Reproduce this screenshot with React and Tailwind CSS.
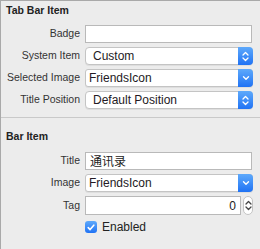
import React from 'react';

// --- small drawings ---
function UpDown({ className = 'stroke-white' }) {
  return (
    <svg width="7" height="11" viewBox="0 0 7 11" className={className} fill="none" strokeWidth="1.3" strokeLinecap="round" strokeLinejoin="round">
      <path d="M1 4 L3.5 1.5 L6 4" />
      <path d="M1 7 L3.5 9.5 L6 7" />
    </svg>
  );
}

function Down() {
  return (
    <svg width="8" height="6" viewBox="0 0 8 6" className="stroke-white" fill="none" strokeWidth="1.4" strokeLinecap="round" strokeLinejoin="round">
      <path d="M1.5 1.8 L4 4.3 L6.5 1.8" />
    </svg>
  );
}

// --- controls ---
function TextField({ children, right }) {
  return (
    <div className={`h-[18px] w-[167px] bg-white border border-[#b9b9b9] flex items-center px-[4px] text-[12px] text-[#222] ${right ? 'justify-end' : ''}`}>
      {children}
    </div>
  );
}

function PopUp({ value, pulldown }) {
  return (
    <div className={`h-[18px] w-[168px] flex bg-white border border-[#c4c4c4] shadow-[0_1px_0_rgba(0,0,0,0.06)] ${pulldown ? 'rounded-[3px]' : 'rounded-[4px]'}`}>
      <div className={`flex-1 flex items-center text-[12px] text-[#241a24] ${pulldown ? 'pl-[3px]' : 'pl-[7px]'}`}>{value}</div>
      <div className="w-[15px] -my-px -mr-px rounded-r-[4px] bg-gradient-to-b from-[#5ea9fb] to-[#1f72f4] flex items-center justify-center">
        {pulldown ? <Down /> : <UpDown />}
      </div>
    </div>
  );
}

function Row({ label, children }) {
  return (
    <div className="flex items-center h-[18px]">
      <div className="w-[79px] text-right text-[10.5px] text-[#333]">{label}</div>
      <div className="ml-[5px]">{children}</div>
    </div>
  );
}

function Header({ children }) {
  return <div className="h-[14px] pl-[5px] flex items-center text-[10.5px] font-bold text-[#222]">{children}</div>;
}

export default function App() {
  return (
    <div className="w-[260px] h-[249px] bg-[#ececec] border-l border-t border-[#a9a9a9] font-['Liberation_Sans',sans-serif] overflow-hidden">
      {/* Tab Bar Item */}
      <div className="pt-[3px] pb-[8px] border-b border-[#c9c9c9]">
        <Header>Tab Bar Item</Header>
        <div className="mt-[7px] flex flex-col gap-[4px]">
          <Row label="Badge"><TextField /></Row>
          <Row label="System Item"><PopUp value="Custom" /></Row>
          <Row label="Selected Image"><PopUp value="FriendsIcon" pulldown /></Row>
          <Row label="Title Position"><PopUp value="Default Position" /></Row>
        </div>
      </div>

      {/* Bar Item */}
      <div className="pt-[12px]">
        <Header>Bar Item</Header>
        <div className="mt-[8px] flex flex-col gap-[4px]">
          <Row label="Title">
            <TextField><span className="font-['Noto_Sans_CJK_SC',sans-serif]">通讯录</span></TextField>
          </Row>
          <Row label="Image"><PopUp value="FriendsIcon" pulldown /></Row>
          <div className="flex items-center h-[19px]">
            <div className="w-[79px] text-right text-[10.5px] text-[#333]">Tag</div>
            <div className="ml-[5px] flex items-center gap-[2px]">
              <div className="h-[19px] w-[156px] bg-white border border-[#b9b9b9] flex items-center justify-end pr-[4px] text-[12px] text-[#222]">0</div>
              <div className="h-[19px] w-[10px] bg-white border border-[#c4c4c4] rounded-[5px] flex items-center justify-center">
                <UpDown className="stroke-[#444]" />
              </div>
            </div>
          </div>
          <div className="flex items-center h-[12px] pl-[84px] mt-[2px]">
            <div className="w-[12px] h-[12px] rounded-[3px] bg-gradient-to-b from-[#5ea9fb] to-[#1f72f4] flex items-center justify-center">
              <svg width="8" height="7" viewBox="0 0 8 7" fill="none" className="stroke-white" strokeWidth="1.6" strokeLinecap="round" strokeLinejoin="round">
                <path d="M1.2 3.6 L3.1 5.6 L6.8 1.2" />
              </svg>
            </div>
            <span className="ml-[5px] text-[12px] text-[#222]">Enabled</span>
          </div>
        </div>
      </div>
    </div>
  );
}
